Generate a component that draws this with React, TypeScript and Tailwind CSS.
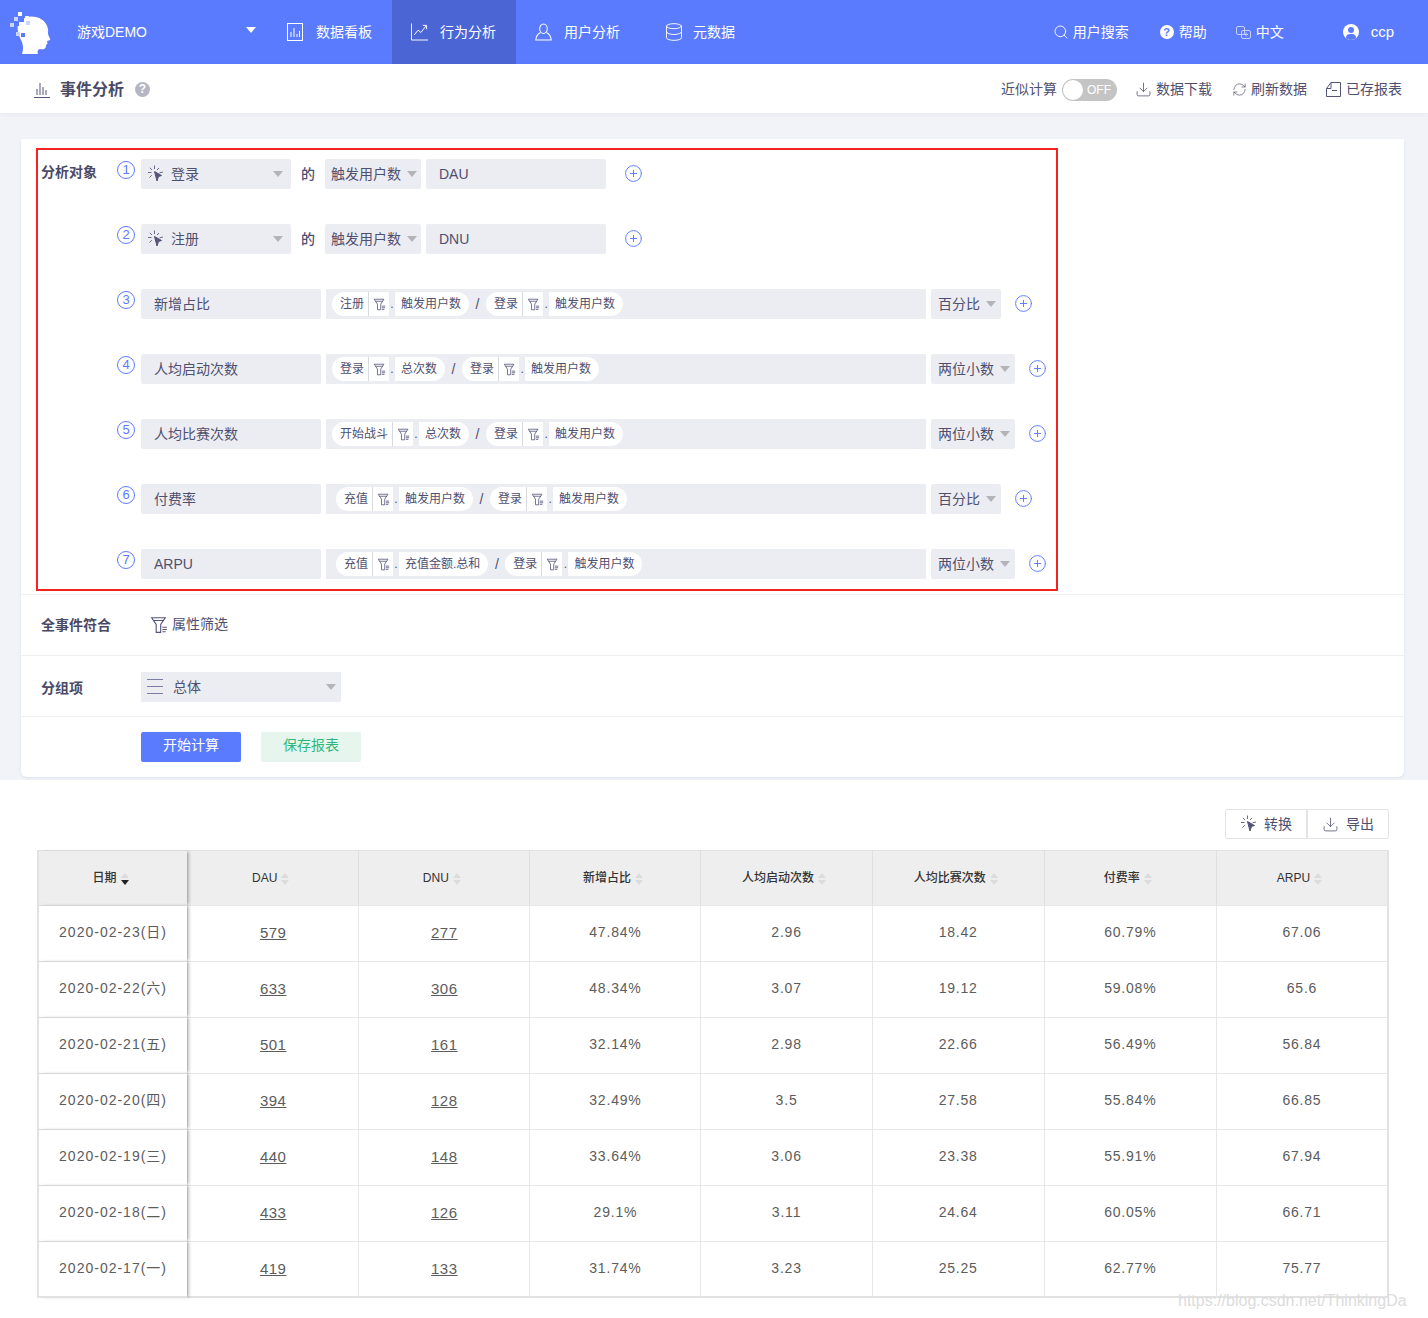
import React from 'react';
import { CirclePlus, Database, Download, RefreshCw, Search } from 'lucide-react';

const Caret = ({ className = 'border-t-[#b4b4b8]' }: { className?: string }) => (
  <span className={`inline-block w-0 h-0 border-x-[5px] border-x-transparent border-t-[6px] ${className}`} />
);

const ClickIcon = () => (
  <svg width="18" height="18" viewBox="0 0 18 18" fill="none" stroke="#6a6a8c" strokeWidth="1">
    <path d="M7.5 6.5 L14.5 10.5 L11.5 11.5 L10 16 Z" fill="#55557a" stroke="#55557a" />
    <path d="M7.5 .5v3.5M1 7.5h3.5M2.8 2.8l2.2 2.2M2.5 12.5l2.3-2.3M12 3l-2 2M16 7l-3.5 .8" />
  </svg>
);

const FilterIcon = ({ size = 14 }: { size?: number }) => (
  <svg width={size} height={size} viewBox="0 0 16 16" fill="none" stroke="#55557a" strokeWidth="1">
    <path d="M1.5 1.5h12L9.5 7.5v7h-4v-7z" />
    <path d="M3 4h9M11 10h4M11 12h4M11 14h3" />
  </svg>
);

const BarsFrame = () => (
  <svg width="16" height="18" viewBox="0 0 16 18" fill="none" stroke="white" strokeWidth="1">
    <rect x="0.5" y="0.5" width="15" height="17" />
    <path d="M4 14V9M7 14V5M10 14v-3M12.5 14V8" />
  </svg>
);

const TrendIcon = () => (
  <svg width="18" height="18" viewBox="0 0 18 18" fill="none" stroke="white" strokeWidth="1">
    <path d="M.5 0v17.5H18" />
    <path d="M3.5 12l4-5 3 2.5L16 2.5M12.5 2H16.5V6" />
  </svg>
);

const UserIcon = () => (
  <svg width="18" height="18" viewBox="0 0 18 18" fill="none" stroke="white" strokeWidth="1.1">
    <ellipse cx="9" cy="5.5" rx="4" ry="5" />
    <path d="M5.8 9.5C3 11 1 13.5 .8 17.5H17.2C17 13.5 15 11 12.2 9.5" />
  </svg>
);

const Logo = () => (
  <svg width="44" height="44" viewBox="0 0 44 44" className="shrink-0">
    <path
      d="M9 14 C12 8 20 5 27 7 C36 9 40 17 39 23 C39 26 42 29 41 30 L38 31 C39 33 38 35 37 35 C37 38 36 40 31 39 C29 39 28 42 29 44 L13 44 C15 38 14 33 11 28 C9 24 8 18 9 14Z"
      fill="white"
    />
    {[
      [9, 2], [5, 7], [11, 8], [16, 6], [1, 13], [6, 12], [12, 12], [17, 11], [4, 18], [11, 18], [7, 22], [12, 23],
    ].map(([x, y], i) => (
      <rect key={i} x={x} y={y} width="4" height="4" fill={i % 3 === 2 ? '#5b7bfe' : i % 3 === 0 ? '#ffffff' : '#c9d4ff'} />
    ))}
  </svg>
);

const NavItem = ({ icon, label, active }: { icon: React.ReactNode; label: string; active?: boolean }) => (
  <div className={`w-[124px] h-full flex items-center pl-[19px] gap-[12px] ${active ? 'bg-[#4b66d4]' : ''}`}>
    <span className="w-[17px] flex justify-start">{icon}</span>
    <span>{label}</span>
  </div>
);

const Circled = ({ n }: { n: number }) => (
  <span className="mt-[2px] mr-[6px] w-[18px] h-[18px] shrink-0 rounded-full border border-[#5b7bfe] text-[#5b7bfe] text-[13px] leading-[16px] text-center">
    {n}
  </span>
);

const Plus = ({ className }: { className: string }) => (
  <CirclePlus size={19} strokeWidth={1.2} color="#5b7bfe" className={className} />
);

const EventRow = ({ n, event, name }: { n: number; event: string; name: string }) => (
  <div className="flex items-start h-[30px] mb-[35px]">
    <Circled n={n} />
    <div className="w-[150px] h-[30px] rounded-[2px] bg-[#ecedf2] flex items-center pl-[6px] pr-[8px] text-[#4f4f6f]">
      <ClickIcon />
      <span className="ml-[6px] flex-1">{event}</span>
      <Caret />
    </div>
    <span className="w-[34px] h-[30px] leading-[30px] text-center font-medium">的</span>
    <div className="w-[96px] h-[30px] rounded-[2px] bg-[#ecedf2] flex items-center justify-between pl-[6px] pr-[4px]">
      <span>触发用户数</span>
      <Caret />
    </div>
    <div className="ml-[5px] w-[180px] h-[30px] rounded-[2px] bg-[#ecedf2] leading-[30px] pl-[13px]">{name}</div>
    <Plus className="ml-[18px] mt-[5px]" />
  </div>
);

const Chip = ({ event, metric, wide }: { event: string; metric: string; wide?: boolean }) => (
  <div className="flex h-[24px] items-stretch text-[12px] leading-[24px]">
    <span className={`bg-white rounded-l-full pr-[4px] border-r border-[#d9d9e0] ${wide ? 'pl-[8px] ml-[4px]' : 'pl-[8px]'}`}>{event}</span>
    <span className="bg-white w-[20px] flex items-center justify-center">
      <FilterIcon size={13} />
    </span>
    <span className="w-[6px] text-center">.</span>
    <span className="bg-white rounded-r-full pl-[6px] pr-[8px]">{metric}</span>
  </div>
);

const formulas: {
  n: number;
  name: string;
  a: [string, string];
  b: [string, string];
  fmt: string;
}[] = [
  { n: 3, name: '新增占比', a: ['注册', '触发用户数'], b: ['登录', '触发用户数'], fmt: '百分比' },
  { n: 4, name: '人均启动次数', a: ['登录', '总次数'], b: ['登录', '触发用户数'], fmt: '两位小数' },
  { n: 5, name: '人均比赛次数', a: ['开始战斗', '总次数'], b: ['登录', '触发用户数'], fmt: '两位小数' },
  { n: 6, name: '付费率', a: ['充值', '触发用户数'], b: ['登录', '触发用户数'], fmt: '百分比' },
  { n: 7, name: 'ARPU', a: ['充值', '充值金额.总和'], b: ['登录', '触发用户数'], fmt: '两位小数' },
];

const FormulaRow = ({ f, last }: { f: (typeof formulas)[number]; last: boolean }) => (
  <div className={`flex items-start h-[30px] ${last ? 'mb-[12px]' : 'mb-[35px]'}`}>
    <Circled n={f.n} />
    <div className="w-[180px] h-[30px] rounded-[2px] bg-[#ecedf2] leading-[30px] pl-[13px]">{f.name}</div>
    <div className="ml-[5px] w-[600px] h-[30px] bg-[#ecedf2] flex items-center pl-[6px]">
      <Chip event={f.a[0]} metric={f.a[1]} wide={f.a[0] === '充值'} />
      <span className="w-[17px] text-center">/</span>
      <Chip event={f.b[0]} metric={f.b[1]} />
    </div>
    <div
      className={`ml-[5px] h-[30px] rounded-[2px] bg-[#ecedf2] flex items-center justify-between pl-[7px] pr-[5px] ${
        f.fmt === '百分比' ? 'w-[70px]' : 'w-[84px]'
      }`}
    >
      <span>{f.fmt}</span>
      <Caret />
    </div>
    <Plus className="ml-[13px] mt-[5px]" />
  </div>
);

const SortCarets = ({ active }: { active?: boolean }) => (
  <span className="inline-flex flex-col gap-[2px] ml-[4px] align-middle">
    <span className="w-0 h-0 border-x-[4px] border-x-transparent border-b-[5px] border-b-[#dcdcdc]" />
    <span className={`w-0 h-0 border-x-[4px] border-x-transparent border-t-[5px] ${active ? 'border-t-[#222]' : 'border-t-[#dcdcdc]'}`} />
  </span>
);

const columns = ['DAU', 'DNU', '新增占比', '人均启动次数', '人均比赛次数', '付费率', 'ARPU'];
const widths = ['w-[171px]', 'w-[171px]', 'w-[171px]', 'w-[171px]', 'w-[172px]', 'w-[172px]', 'w-[171px]'];

const rows = [
  ['2020-02-23(日)', '579', '277', '47.84%', '2.96', '18.42', '60.79%', '67.06'],
  ['2020-02-22(六)', '633', '306', '48.34%', '3.07', '19.12', '59.08%', '65.6'],
  ['2020-02-21(五)', '501', '161', '32.14%', '2.98', '22.66', '56.49%', '56.84'],
  ['2020-02-20(四)', '394', '128', '32.49%', '3.5', '27.58', '55.84%', '66.85'],
  ['2020-02-19(三)', '440', '148', '33.64%', '3.06', '23.38', '55.91%', '67.94'],
  ['2020-02-18(二)', '433', '126', '29.1%', '3.11', '24.64', '60.05%', '66.71'],
  ['2020-02-17(一)', '419', '133', '31.74%', '3.23', '25.25', '62.77%', '75.77'],
];

export default function App() {
  return (
    <div
      className="relative w-[1428px] h-[1318px] overflow-hidden bg-white text-[14px] text-[#4f4f6f]"
      style={{ fontFamily: '"Liberation Sans", "Noto Sans CJK SC", sans-serif' }}
    >
      {/* top nav */}
      <header className="h-[64px] bg-[#5b7bfe] text-white flex items-center">
        <div className="w-[268px] h-full flex items-center pl-[9px]">
          <Logo />
          <span className="ml-[24px] flex-1">游戏DEMO</span>
          <Caret className="border-t-white mr-[12px] -mt-[4px]" />
        </div>
        <div className="h-full flex">
          <NavItem icon={<BarsFrame />} label="数据看板" />
          <NavItem active icon={<TrendIcon />} label="行为分析" />
          <NavItem icon={<UserIcon />} label="用户分析" />
          <div className="h-full flex items-center pl-[24px] gap-[9px]">
            <Database size={20} strokeWidth={1.1} />
            <span>元数据</span>
          </div>
        </div>
        <div className="ml-auto flex items-center pr-[34px]">
          <Search size={16} strokeWidth={1.4} />
          <span className="ml-[4px]">用户搜索</span>
          <span className="ml-[31px] w-[14px] h-[14px] rounded-full bg-white text-[#5b7bfe] text-[11px] leading-[14px] text-center font-bold">?</span>
          <span className="ml-[5px]">帮助</span>
          <svg width="15" height="15" viewBox="0 0 15 15" fill="none" stroke="#c5d0ff" strokeWidth="1" className="ml-[29px]">
            <rect x="0.5" y="1.5" width="8" height="8" rx="1.5" />
            <rect x="5.5" y="5.5" width="9" height="8" rx="1.5" />
            <path d="M8 9.5h4M10 7.5v4" />
          </svg>
          <span className="ml-[5px]">中文</span>
          <span className="ml-[59px] w-[16px] h-[16px] rounded-full bg-white relative overflow-hidden">
            <span className="absolute left-[5px] top-[3px] w-[6px] h-[6px] rounded-full bg-[#5b7bfe]" />
            <span className="absolute left-[3px] top-[10px] w-[10px] h-[8px] rounded-full bg-[#5b7bfe]" />
          </span>
          <span className="ml-[12px] text-[15px]">ccp</span>
        </div>
      </header>

      {/* page title bar */}
      <div className="relative h-[49px] bg-white shadow-[0_1px_4px_rgba(80,90,140,0.08)] flex items-center pt-[2px] pl-[34px] pr-[26px]">
        <svg width="16" height="16" viewBox="0 0 16 16" fill="none" stroke="#55557a" strokeWidth="1">
          <path d="M0 15.5h16M3 13V7M6 13V1M9 13V5M12 13V8" />
        </svg>
        <span className="ml-[10px] text-[16px] font-bold text-[#4a4a66]">事件分析</span>
        <span className="ml-[11px] w-[15px] h-[15px] rounded-full bg-[#b5b5c3] text-white text-[12px] leading-[15px] text-center font-bold">?</span>
        <div className="ml-auto flex items-center">
          <span>近似计算</span>
          <span className="ml-[5px] w-[55px] h-[22px] rounded-full bg-[#c4c4c4] relative text-white text-[12px] leading-[22px] pl-[25px]">
            <span className="absolute left-[1px] top-[1px] w-[20px] h-[20px] rounded-full bg-white" />
            OFF
          </span>
          <Download size={17} strokeWidth={1.1} className="ml-[18px]" />
          <span className="ml-[4px]">数据下载</span>
          <RefreshCw size={15} strokeWidth={1.1} className="ml-[20px]" />
          <span className="ml-[4px]">刷新数据</span>
          <svg width="15" height="15" viewBox="0 0 15 15" fill="none" stroke="#55557a" strokeWidth="1" className="ml-[19px]">
            <path d="M.5 6.5L5 .5H14.5V14.5H.5ZM.5 6.5H5V.5M6 8.5H11" />
          </svg>
          <span className="ml-[5px]">已存报表</span>
        </div>
      </div>

      {/* query panel */}
      <section className="h-[667px] bg-[#f1f3f9] pt-[26px] px-[21px]">
        <div className="w-[1383px] h-[638px] bg-white rounded-b-[6px] shadow-[0_1px_3px_rgba(80,90,140,0.1)]">
          <div className="pt-[9px] pl-[15px]">
            <div className="w-[1022px] h-[443px] border-2 border-[#f4231f] pt-[9px] pl-[3px]">
              <div className="flex">
                <div className="w-[76px] shrink-0 font-bold text-[#4a4a66] -mt-[2px] leading-[30px]">分析对象</div>
                <div>
                  <EventRow n={1} event="登录" name="DAU" />
                  <EventRow n={2} event="注册" name="DNU" />
                  {formulas.map((f, i) => (
                    <FormulaRow key={f.n} f={f} last={i === formulas.length - 1} />
                  ))}
                </div>
              </div>
            </div>
          </div>
          <div className="mt-[3px] h-[61px] border-t border-[#eeeff3] flex items-center pl-[20px]">
            <span className="w-[109px] font-bold text-[#4a4a66]">全事件符合</span>
            <FilterIcon size={18} />
            <span className="ml-[4px] -mt-[1px]">属性筛选</span>
          </div>
          <div className="h-[61px] border-t border-[#eeeff3] flex items-center pl-[20px]">
            <span className="w-[100px] font-bold text-[#4a4a66] mt-[5px]">分组项</span>
            <div className="mt-[1px] w-[200px] h-[30px] bg-[#ecedf2] flex items-center pl-[6px] pr-[5px]">
              <span className="w-[16px] h-[15px] border-y border-[#7c7ca8] relative">
                <span className="absolute left-0 right-0 top-[6px] h-px bg-[#7c7ca8]" />
              </span>
              <span className="ml-[10px] flex-1 mt-[1px]">总体</span>
              <Caret />
            </div>
          </div>
          <div className="h-[61px] border-t border-[#eeeff3] flex items-center pl-[120px] gap-[20px]">
            <button className="-mt-[1px] w-[100px] h-[30px] pb-[2px] rounded-[2px] bg-[#5b7bfe] text-white">开始计算</button>
            <button className="-mt-[1px] w-[100px] h-[30px] pb-[2px] rounded-[2px] bg-[#e6f6ee] text-[#2fb67c]">保存报表</button>
          </div>
        </div>
      </section>

      {/* results */}
      <section className="pt-[29px] pl-[37px]">
        <div className="w-[1352px] flex justify-end">
          <button className="w-[82px] h-[30px] border border-[#e3e3e8] rounded-l-[2px] flex items-center justify-center gap-[6px]">
            <ClickIcon />
            <span>转换</span>
          </button>
          <button className="w-[82px] h-[30px] border border-[#e3e3e8] rounded-r-[2px] flex items-center justify-center gap-[7px]">
            <Download size={17} strokeWidth={1.1} />
            <span>导出</span>
          </button>
        </div>
        <table className="mt-[11px] w-[1352px] table-fixed border-separate border-spacing-0 border-2 border-t border-b-0 border-[#e2e2e2]">
          <thead>
            <tr className="bg-[#eeeeee] text-[12px] text-[#333]">
              <th className="w-[148px] h-[54px] font-medium pr-[5px] relative z-10 bg-[#eeeeee] shadow-[3px_0_3px_-1px_rgba(0,0,0,0.25)]">
                日期
                <SortCarets active />
              </th>
              {columns.map((c, i) => (
                <th key={c} className={`${widths[i]} h-[54px] border-l border-[#dedede] font-medium pr-[5px]`}>
                  {c}
                  <SortCarets />
                </th>
              ))}
            </tr>
          </thead>
          <tbody>
            {rows.map((r, rowIndex) => (
              <tr key={r[0]} className="text-[14px] tracking-[0.8px] text-[#5c5c5c] text-center">
                {r.map((v, i) => {
                  const last = rowIndex === rows.length - 1;
                  const edge = last ? 'h-[57px] border-b-2 border-b-[#e2e2e2]' : 'h-[56px]';
                  return i === 0 ? (
                    <td key={i} className={`border-t border-[#d8d8d8] relative z-10 bg-white pb-[2px] tracking-[1px] shadow-[3px_0_3px_-1px_rgba(0,0,0,0.25)] ${edge}`}>
                      {v}
                    </td>
                  ) : (
                    <td key={i} className={`border-t border-l border-[#e8e8e8] ${i < 3 ? '' : 'pb-[2px]'} ${edge}`}>
                      {i < 3 ? <span className="underline text-[15px] tracking-[0.5px]">{v}</span> : v}
                    </td>
                  );
                })}
              </tr>
            ))}
          </tbody>
        </table>
      </section>

      {/* csdn watermark */}
      <span className="absolute left-[1178px] top-[1289px] text-[16px] text-[#dcdcdc] whitespace-nowrap">
        https://blog.csdn.net/ThinkingDa
      </span>
    </div>
  );
}
